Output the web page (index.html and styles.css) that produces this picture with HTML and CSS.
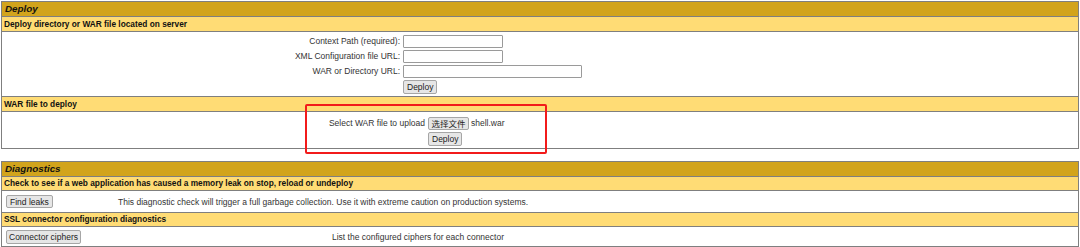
FILE: index.html
```html
<!DOCTYPE html>
<html lang="en">
<head>
<meta charset="utf-8">
<title>Manager</title>
<link rel="stylesheet" href="styles.css">
</head>
<body>
<div class="page">
  <section class="panel">
    <div class="title">Deploy</div>
    <div class="header">Deploy directory or WAR file located on server</div>
    <div class="row server-form">
      <div class="form-grid">
        <label class="lbl">Context Path (required):</label><input class="field short" type="text">
        <label class="lbl">XML Configuration file URL:</label><input class="field short" type="text">
        <label class="lbl">WAR or Directory URL:</label><input class="field long" type="text">
        <span></span><span><button class="btn">Deploy</button></span>
      </div>
    </div>
    <div class="header">WAR file to deploy</div>
    <div class="row upload-form">
      <div class="upload-grid">
        <span class="lbl">Select WAR file to upload</span>
        <span class="file"><button class="btn cjk">选择文件</button><span class="fname">shell.war</span></span>
        <span></span><span><button class="btn">Deploy</button></span>
      </div>
    </div>
  </section>

  <section class="panel diag">
    <div class="title">Diagnostics</div>
    <div class="header slim">Check to see if a web application has caused a memory leak on stop, reload or undeploy</div>
    <div class="row action leaks">
      <button class="btn">Find leaks</button>
      <span class="desc">This diagnostic check will trigger a full garbage collection. Use it with extreme caution on production systems.</span>
    </div>
    <div class="header slim">SSL connector configuration diagnostics</div>
    <div class="row action ciphers">
      <button class="btn">Connector ciphers</button>
      <span class="desc">List the configured ciphers for each connector</span>
    </div>
  </section>

  <div class="annotation"></div>
</div>
</body>
</html>
```

FILE: styles.css
```css
* { box-sizing: border-box; }

html, body { background: #ffffff; }

body {
  margin: 0;
  padding: 1px 0 0 1px;
  font-family: "Liberation Sans", Arial, sans-serif;
  font-size: 8.5px;
  color: #333333;
}

.page {
  position: relative;
  width: 1078px;
}

.panel {
  width: 1078px;
  border: 1px solid #7f7f7f;
  display: flex;
  flex-direction: column;
}

.panel.diag { margin-top: 12px; }

.title {
  height: 15px;
  line-height: 14px;
  padding-left: 3px;
  background: #d2a41c;
  border-bottom: 1px solid #7f7f7f;
  color: #111;
  font-size: 9.8px;
  font-weight: bold;
  font-style: italic;
}

.header {
  height: 15px;
  line-height: 14px;
  padding-left: 2px;
  background: #ffdc75;
  border-bottom: 1px solid #7f7f7f;
  color: #111;
  font-weight: bold;
  font-size: 8.3px;
}

.header.slim {
  height: 14px;
  line-height: 13px;
}

.row {
  border-bottom: 1px solid #7f7f7f;
  background: #fff;
}

.row:last-child { border-bottom: none; }

.server-form {
  height: 65px;
  padding-top: 3px;
}

.form-grid {
  display: grid;
  grid-template-columns: 398px auto;
  column-gap: 3px;
  row-gap: 2px;
  align-items: center;
}

.lbl {
  text-align: right;
  line-height: 13px;
  white-space: nowrap;
}

.field {
  display: block;
  height: 13px;
  border: 1px solid #9a9a9a;
  border-radius: 1px;
  background: #fff;
  padding: 0;
  margin: 0;
}

.field.short { width: 100px; }
.field.long { width: 179px; }

.btn {
  display: inline-block;
  height: 14px;
  margin: 0;
  padding: 0 3px;
  font-family: "Liberation Sans", Arial, sans-serif;
  font-size: 8.5px;
  line-height: 12px;
  color: #222;
  background: #e6e6e6;
  border: 1px solid #a6a6a6;
  border-radius: 2px;
  vertical-align: middle;
}

.btn.cjk {
  height: 13px;
  width: 41px;
  padding: 0;
  font-family: "Liberation Sans", "Noto Sans CJK SC", sans-serif;
}

.upload-form {
  height: 36px;
  padding-top: 5px;
}

.upload-grid {
  display: grid;
  grid-template-columns: 423px auto;
  column-gap: 3px;
  row-gap: 2px;
  align-items: center;
}

.file {
  display: flex;
  align-items: center;
  gap: 2px;
}

.fname { line-height: 13px; }

.action {
  display: grid;
  align-items: center;
  padding-left: 4px;
}

.action .btn { justify-self: start; }

.leaks {
  height: 22px;
  grid-template-columns: 112px auto;
}

.leaks .btn { height: 13px; }

.ciphers {
  height: 19px;
  grid-template-columns: 326px auto;
}

.ciphers .btn { padding: 0 2px; }

.desc { white-space: nowrap; }

.annotation {
  position: absolute;
  left: 304px;
  top: 103px;
  width: 242px;
  height: 50px;
  border: 2px solid #f21b1b;
  border-radius: 2px;
  pointer-events: none;
}
```
